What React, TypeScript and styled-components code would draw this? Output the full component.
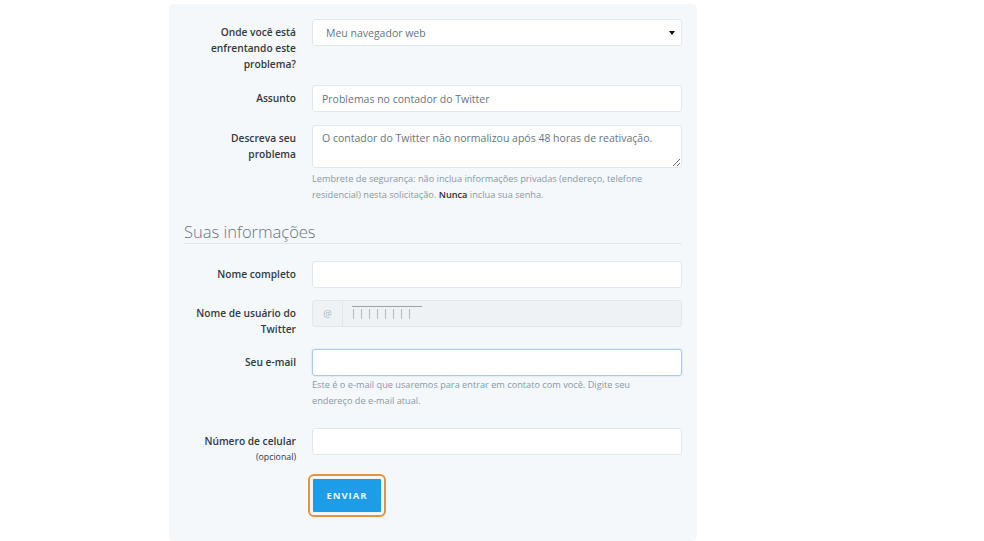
import styled, { createGlobalStyle } from 'styled-components';

const GlobalStyle = createGlobalStyle`
  html, body {
    margin: 0;
    padding: 0;
    background: #ffffff;
  }
  body {
    font-family: 'Open Sans', 'Liberation Sans', sans-serif;
    color: #292f33;
  }
`;

const Page = styled.div`
  width: 984px;
  height: 541px;
  overflow: hidden;
  padding-top: 4px;
  box-sizing: border-box;
`;

const Panel = styled.form`
  margin-left: 169px;
  width: 528px;
  box-sizing: border-box;
  padding: 15px 15px 28px;
  background: #f5f8fa;
  border-radius: 5px;
`;

const Row = styled.div<{ gap?: number }>`
  display: grid;
  grid-template-columns: 112px 1fr;
  column-gap: 16px;
  align-items: start;
  margin-bottom: ${({ gap }) => (gap ?? 13)}px;
`;

const Label = styled.label`
  text-align: right;
  font-size: 10.2px;
  font-weight: 600;
  line-height: 16px;
  color: #33393d;
  padding-top: 5px;
`;

const Small = styled.span`
  display: block;
  font-size: 8.8px;
  font-weight: 400;
`;

const Field = styled.div`
  display: flex;
  flex-direction: column;
`;

const fieldBase = `
  box-sizing: border-box;
  width: 100%;
  border: 1px solid #e1e8ed;
  border-radius: 3px;
  background: #ffffff;
  font-family: 'Open Sans', 'Liberation Sans', sans-serif;
  font-size: 10.5px;
  color: #66757f;
  padding: 0 9px;
  outline: none;
`;

const Input = styled.input<{ focused?: boolean }>`
  ${fieldBase}
  height: 27px;
  ${({ focused }) =>
    focused
      ? `border-color: #a7cbe8; box-shadow: 0 0 2px rgba(80, 150, 210, 0.35);`
      : ''}
`;

const TextArea = styled.textarea`
  ${fieldBase}
  display: block;
  height: 43px;
  padding: 5px 9px;
  line-height: 14px;
  resize: vertical;
`;

const SelectBox = styled.div`
  ${fieldBase}
  height: 27px;
  display: flex;
  align-items: center;
  justify-content: space-between;
  padding: 0 6px 0 13px;
`;

const Caret = styled.span`
  width: 0;
  height: 0;
  border-left: 3px solid transparent;
  border-right: 3px solid transparent;
  border-top: 4px solid #111111;
`;

const Help = styled.p<{ top?: number; bottom?: number }>`
  margin: ${({ top }) => top ?? 3}px 0 ${({ bottom }) => bottom ?? 0}px;
  padding-right: 24px;
  font-size: 9.2px;
  line-height: 15.5px;
  color: #8899a6;
`;

const Strong = styled.strong`
  color: #292f33;
  font-weight: 600;
`;

const Heading = styled.h2`
  margin: 19px 0 17px;
  font-size: 16.5px;
  font-weight: 300;
  line-height: 22px;
  color: #66757f;
  border-bottom: 1px solid #e1e8ed;
`;

const Group = styled.div`
  display: flex;
  height: 27px;
  box-sizing: border-box;
  border: 1px solid #e1e8ed;
  border-radius: 3px;
  background: #eff2f5;
`;

const Addon = styled.span`
  width: 29px;
  display: flex;
  align-items: center;
  justify-content: center;
  font-size: 9.5px;
  color: #aab8c2;
  border-right: 1px solid #e1e8ed;
`;

const Masked = styled.div`
  flex: 1;
  display: flex;
  align-items: flex-start;
  padding: 4px 0 0 9px;
`;

const ButtonRow = styled.div`
  padding-left: 128px;
`;

const Submit = styled.button`
  width: 70px;
  height: 35px;
  margin-top: 13px;
  border: 1px solid #eef2f5;
  border-radius: 2px;
  background: #1d9de8;
  color: #e6f4fd;
  font-family: 'Open Sans', 'Liberation Sans', sans-serif;
  font-size: 9.5px;
  font-weight: 700;
  letter-spacing: 1px;
  outline: 2px solid #e8923f;
  outline-offset: 2px;
  cursor: pointer;
`;

function RedactedName() {
  const ticks = Array.from({ length: 8 }, (_, i) => 1.5 + i * 8);
  return (
    <svg width="72" height="16" viewBox="0 0 72 16">
      <line x1="0" y1="1.5" x2="70" y2="1.5" stroke="#98a3ab" strokeWidth="1" />
      {ticks.map((x) => (
        <line key={x} x1={x} y1="4" x2={x} y2="14" stroke="#b0bac2" strokeWidth="1" />
      ))}
    </svg>
  );
}

export default function App() {
  return (
    <>
      <GlobalStyle />
      <Page>
        <Panel onSubmit={(e) => e.preventDefault()}>
          <Row>
            <Label>
              Onde você está
              <br />
              enfrentando este
              <br />
              problema?
            </Label>
            <SelectBox>
              <span>Meu navegador web</span>
              <Caret />
            </SelectBox>
          </Row>

          <Row>
            <Label>Assunto</Label>
            <Input readOnly defaultValue="Problemas no contador do Twitter" />
          </Row>

          <Row gap={0}>
            <Label>
              Descreva seu
              <br />
              problema
            </Label>
            <Field>
              <TextArea
                readOnly
                defaultValue="O contador do Twitter não normalizou após 48 horas de reativação."
              />
              <Help>
                Lembrete de segurança: não inclua informações privadas (endereço, telefone
                residencial) nesta solicitação. <Strong>Nunca</Strong> inclua sua senha.
              </Help>
            </Field>
          </Row>

          <Heading>Suas informações</Heading>

          <Row gap={12}>
            <Label>Nome completo</Label>
            <Input />
          </Row>

          <Row gap={12}>
            <Label>
              Nome de usuário do
              <br />
              Twitter
            </Label>
            <Group>
              <Addon>@</Addon>
              <Masked>
                <RedactedName />
              </Masked>
            </Group>
          </Row>

          <Row gap={0}>
            <Label>Seu e-mail</Label>
            <Field>
              <Input focused />
              <Help top={1} bottom={20}>
                Este é o e-mail que usaremos para entrar em contato com você. Digite seu
                endereço de e-mail atual.
              </Help>
            </Field>
          </Row>

          <Row gap={0}>
            <Label>
              Número de celular
              <Small>(opcional)</Small>
            </Label>
            <Input />
          </Row>

          <ButtonRow>
            <Submit type="submit">ENVIAR</Submit>
          </ButtonRow>
        </Panel>
      </Page>
    </>
  );
}
